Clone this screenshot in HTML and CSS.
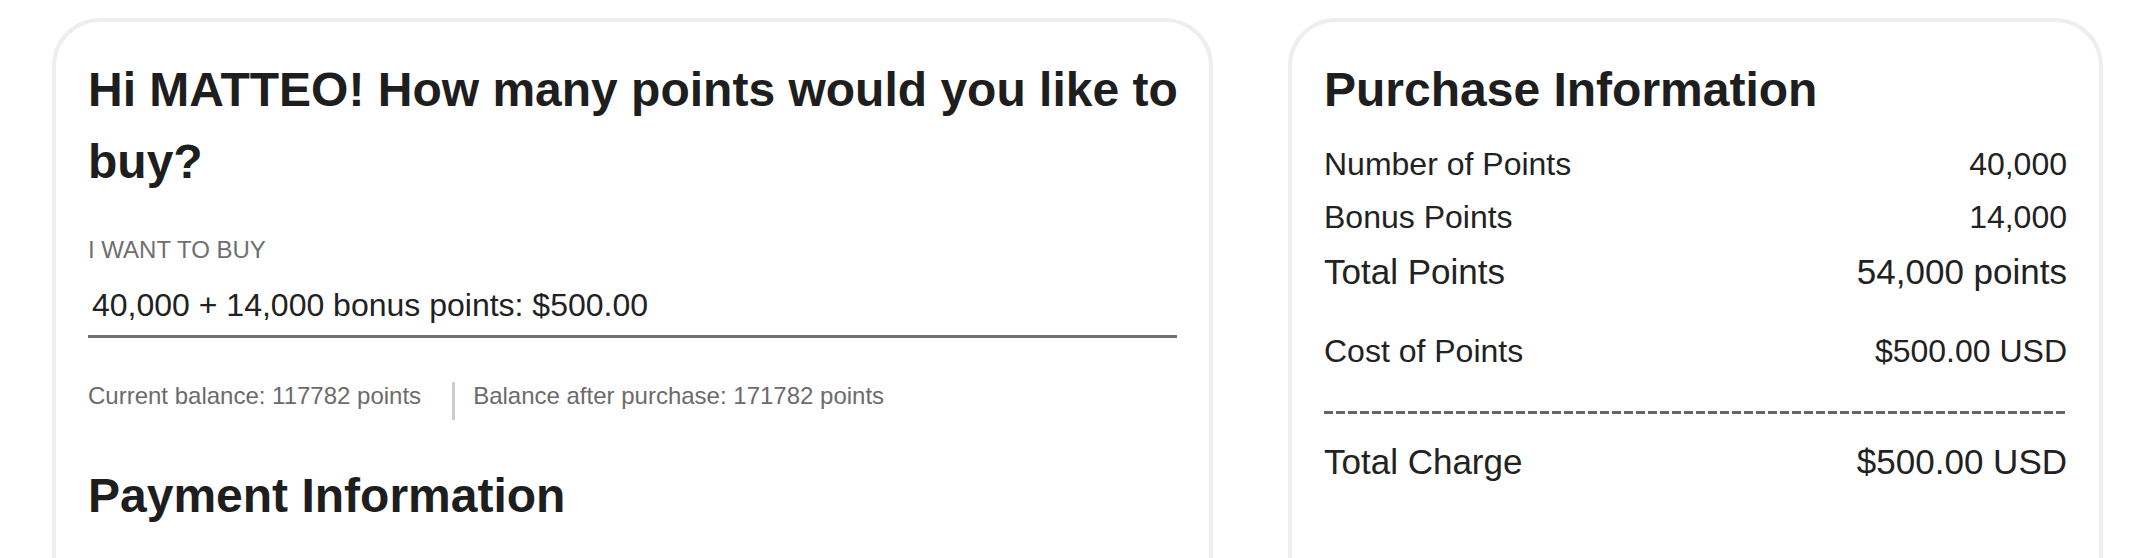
FILE: index.html
```html
<!DOCTYPE html>
<html lang="en">
  <head>
    <meta charset="UTF-8" />
    <title>Buy Points</title>
    <link rel="stylesheet" href="styles.css">
  </head>
  <body>
    <main class="checkout">
      <!-- Points picker -->
      <section class="card buy-card">
        <h1 class="card-title">Hi MATTEO! How many points would you like to buy?</h1>

        <label class="field-label" for="pointsSelect">I want to buy</label>
        <select class="points-select" id="pointsSelect">
          <option>40,000 + 14,000 bonus points: $500.00</option>
        </select>

        <div class="balance-row">
          <span>Current balance: 117782 points</span>
          <span class="balance-divider"></span>
          <span>Balance after purchase: 171782 points</span>
        </div>

        <h2 class="card-title payment-title">Payment Information</h2>
      </section>

      <!-- Summary -->
      <aside class="card summary-card">
        <h2 class="card-title">Purchase Information</h2>

        <div class="summary">
          <div class="summary-row">
            <span>Number of Points</span>
            <span>40,000</span>
          </div>
          <div class="summary-row">
            <span>Bonus Points</span>
            <span>14,000</span>
          </div>
          <div class="summary-row big">
            <span>Total Points</span>
            <span>54,000 points</span>
          </div>
          <div class="summary-row cost">
            <span>Cost of Points</span>
            <span>$500.00 USD</span>
          </div>
          <div class="summary-divider"></div>
          <div class="summary-row big charge">
            <span>Total Charge</span>
            <span>$500.00 USD</span>
          </div>
        </div>
      </aside>
    </main>
  </body>
</html>
```

FILE: styles.css
```css
body {
  margin: 0;
  padding: 18px 29px 0 52px;
  background: #fff;
  color: #222;
  font-family: "Liberation Sans", Arial, Helvetica, sans-serif;
  overflow: hidden;
}

.checkout {
  display: grid;
  grid-template-columns: 1161fr 815fr;
  gap: 75px;
  align-items: start;
}

.card {
  border: 4px solid #eee;
  border-radius: 48px;
  padding: 32px;
  min-height: 700px;
}

.card-title {
  margin: 0;
  font-size: 48px;
  line-height: 72px;
  font-weight: bold;
  color: #1e1e1e;
}

.buy-card h1 {
  margin-right: -12px;
}

.field-label {
  display: block;
  margin-top: 38px;
  font-size: 24px;
  color: #6f6f6f;
  text-transform: uppercase;
}

.points-select {
  display: block;
  box-sizing: border-box;
  width: 100%;
  height: 63px;
  margin-top: 11px;
  padding: 0 4px;
  border: none;
  border-bottom: 3px solid #707070;
  border-radius: 0;
  background: transparent;
  appearance: none;
  -webkit-appearance: none;
  font-family: inherit;
  font-size: 32px;
  color: #222;
  outline: none;
}

.balance-row {
  display: flex;
  align-items: flex-start;
  margin-top: 44px;
  font-size: 24px;
  color: #6b6b6b;
}

.balance-divider {
  width: 3px;
  height: 38px;
  margin: 0 18px 0 31px;
  background: #ccc;
}

.payment-title {
  margin-top: 40px;
}

.summary {
  display: flex;
  flex-direction: column;
  gap: 16px;
  margin-top: 20px;
}

.summary-row {
  display: flex;
  justify-content: space-between;
  font-size: 32px;
  color: #222;
}

.summary-row.big {
  font-size: 35px;
}

.summary-row.cost {
  margin-top: 25px;
}

.summary-divider {
  margin-top: 25px;
  height: 3px;
  background: repeating-linear-gradient(to right, #666 0 9px, transparent 9px 12px);
}

.summary-row.charge {
  margin-top: 12px;
}
```
